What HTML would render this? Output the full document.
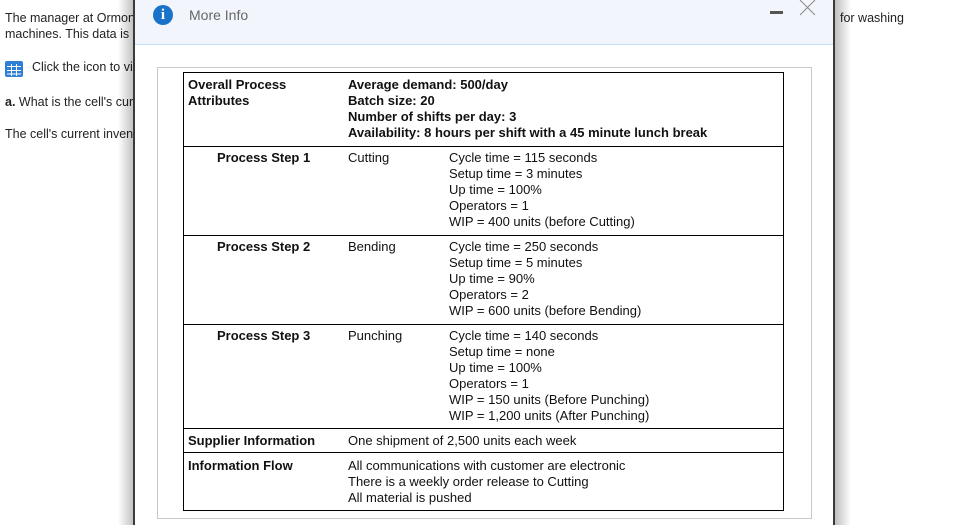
<!DOCTYPE html>
<html><head><style>
body{margin:0;width:965px;height:525px;overflow:hidden;background:#fff;font-family:"Liberation Sans",Arial,sans-serif;color:#222;position:relative}
.a{position:absolute;white-space:nowrap}
.bg{font-size:12.5px;line-height:16px}
.t{font-size:13px;line-height:16px;color:#111}
.b{font-weight:bold}
.hl{position:absolute;left:183px;width:601px;height:1px;background:#000}
</style></head><body>
<div class="a bg" style="left:5px;top:10px">The manager at Ormond<br>machines. This data is</div>
<div class="a bg" style="left:840px;top:10px">for washing</div>
<div class="a" style="left:5px;top:61px;width:18px;height:16px;background:#2f7fd6;border-radius:2px"></div>
<svg class="a" style="left:5px;top:61px" width="18" height="16"><g stroke="#fff" stroke-width="1"><line x1="2" y1="5.5" x2="16" y2="5.5"/><line x1="2" y1="9.5" x2="16" y2="9.5"/><line x1="2" y1="13" x2="16" y2="13"/><line x1="6.5" y1="3" x2="6.5" y2="15"/><line x1="11.5" y1="3" x2="11.5" y2="15"/></g></svg>
<div class="a bg" style="left:32px;top:59px">Click the icon to view</div>
<div class="a bg" style="left:5px;top:94px"><b>a.</b> What is the cell's current</div>
<div class="a bg" style="left:5px;top:126px">The cell's current inventory</div>
<div class="a" style="left:118px;top:0;width:16px;height:525px;background:linear-gradient(to right,rgba(0,0,0,0),rgba(0,0,0,0.25))"></div>
<div class="a" style="left:835px;top:0;width:16px;height:525px;background:linear-gradient(to right,rgba(0,0,0,0.25),rgba(0,0,0,0))"></div>
<div class="a" style="left:133px;top:0;width:698px;height:525px;background:#fff;border-left:2px solid #3a3a3a;border-right:2px solid #3a3a3a"></div>
<div class="a" style="left:135px;top:0;width:698px;height:44px;background:#f2f6fc;border-bottom:1px solid #bfe0f5"></div>
<div class="a" style="left:153px;top:5px;width:20px;height:20px;border-radius:50%;background:#1a73c9;color:#fff;font:bold 15px/20px 'Liberation Serif',serif;text-align:center">i</div>
<div class="a" style="left:189px;top:7px;font-size:14px;color:#666">More Info</div>
<div class="a" style="left:770px;top:11px;width:13px;height:3px;background:#555"></div>
<svg class="a" style="left:799px;top:0" width="18" height="16"><path d="M1 0L16 15M16 0L1 15" stroke="#888" stroke-width="1" fill="none"/></svg>
<div class="a" style="left:157px;top:67px;width:653px;height:450px;border:1px solid #c8c8c8"></div>
<div class="a" style="left:183px;top:72px;width:599px;height:437px;border:1px solid #000"></div>
<div class="hl" style="top:146px"></div>
<div class="hl" style="top:235px"></div>
<div class="hl" style="top:324px"></div>
<div class="hl" style="top:428px"></div>
<div class="hl" style="top:452px"></div>
<div class="a t b" style="left:188px;top:77px">Overall Process<br>Attributes</div>
<div class="a t b" style="left:348px;top:77px">Average demand: 500/day<br>Batch size: 20<br>Number of shifts per day: 3<br>Availability: 8 hours per shift with a 45 minute lunch break</div>
<div class="a t b" style="left:217px;top:150px">Process Step 1</div>
<div class="a t" style="left:348px;top:150px">Cutting</div>
<div class="a t" style="left:449px;top:150px">Cycle time = 115 seconds<br>Setup time = 3 minutes<br>Up time = 100%<br>Operators = 1<br>WIP = 400 units (before Cutting)</div>
<div class="a t b" style="left:217px;top:239px">Process Step 2</div>
<div class="a t" style="left:348px;top:239px">Bending</div>
<div class="a t" style="left:449px;top:239px">Cycle time = 250 seconds<br>Setup time = 5 minutes<br>Up time = 90%<br>Operators = 2<br>WIP = 600 units (before Bending)</div>
<div class="a t b" style="left:217px;top:328px">Process Step 3</div>
<div class="a t" style="left:348px;top:328px">Punching</div>
<div class="a t" style="left:449px;top:328px">Cycle time = 140 seconds<br>Setup time = none<br>Up time = 100%<br>Operators = 1<br>WIP = 150 units (Before Punching)<br>WIP = 1,200 units (After Punching)</div>
<div class="a t b" style="left:188px;top:433px">Supplier Information</div>
<div class="a t" style="left:348px;top:433px">One shipment of 2,500 units each week</div>
<div class="a t b" style="left:188px;top:458px">Information Flow</div>
<div class="a t" style="left:348px;top:458px">All communications with customer are electronic<br>There is a weekly order release to Cutting<br>All material is pushed</div>
</body></html>
